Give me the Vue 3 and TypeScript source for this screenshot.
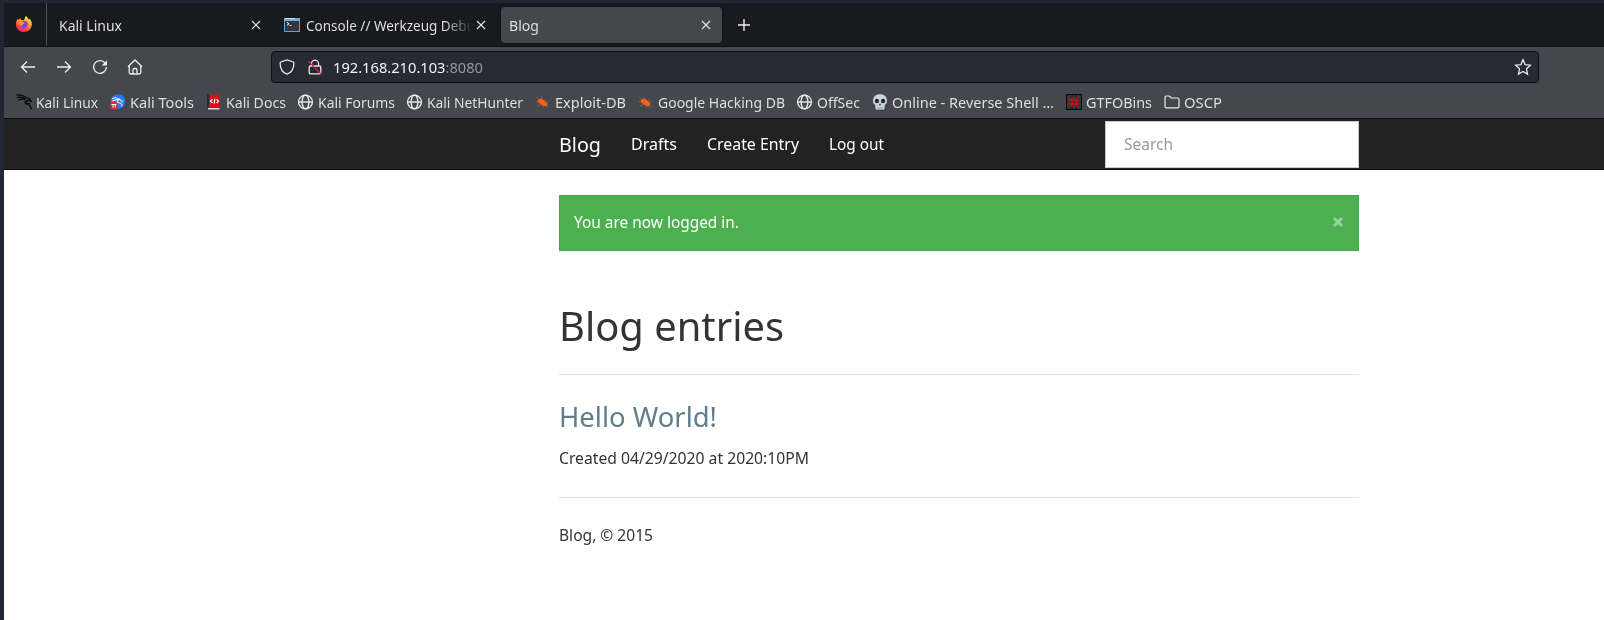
<script setup lang="ts">
interface Bookmark {
  icon: string
  label: string
  width: number
}

const bookmarks: Bookmark[] = [
  { icon: 'dragon', label: 'Kali Linux', width: 62 },
  { icon: 'tools', label: 'Kali Tools', width: 64 },
  { icon: 'docs', label: 'Kali Docs', width: 60 },
  { icon: 'globe', label: 'Kali Forums', width: 77 },
  { icon: 'globe', label: 'Kali NetHunter', width: 96 },
  { icon: 'bug', label: 'Exploit-DB', width: 71 },
  { icon: 'bug', label: 'Google Hacking DB', width: 127 },
  { icon: 'globe', label: 'OffSec', width: 43 },
  { icon: 'skull', label: 'Online - Reverse Shell …', width: 162 },
  { icon: 'bins', label: 'GTFOBins', width: 66 },
  { icon: 'folder', label: 'OSCP', width: 38 },
]

const links = [
  { label: 'Drafts', width: 46 },
  { label: 'Create Entry', width: 92 },
  { label: 'Log out', width: 55 },
]

// Condenses or widens a label so that it takes up exactly the given width.
const vFit = {
  mounted(el: HTMLElement, binding: { value: number }) {
    const natural = el.getBoundingClientRect().width
    el.style.transform = `scaleX(${binding.value / natural})`
    el.style.marginRight = `${binding.value - natural}px`
  },
}
</script>

<template>
  <div class="window">
    <header class="tabs">
      <div class="pinned">
        <svg width="18" height="18" viewBox="0 0 18 18">
          <defs>
            <linearGradient id="fire" x1="0.8" y1="0" x2="0.3" y2="1">
              <stop offset="0" stop-color="#fff04a" />
              <stop offset="0.45" stop-color="#ff9a2e" />
              <stop offset="0.75" stop-color="#ff4449" />
              <stop offset="1" stop-color="#e81d72" />
            </linearGradient>
          </defs>
          <path d="M2.6 3.7 3.6 5 5.3 3.1 6 5.1 9 5.2 10.7 1C12 1.5 12.8 3.3 14 4.4L14.7 3.8C16.7 6 17.2 8.8 16.7 11.1 15.7 15 12.7 17 9 17 4.5 17 1 13.6 1 9.4 1 7.1 1.5 5.2 2.6 3.7Z" fill="url(#fire)" />
          <path d="M5.8 7.4C7.3 5.5 9.3 6.1 10.6 5.7 12.4 6.5 13 8.2 12.7 9.7 12.2 12 10.5 13 8.8 12.9 6.8 12.8 5.3 11.3 5.3 9.4L7.8 9 9.7 8.2Z" fill="#7542e5" />
          <path d="M3.7 6.4 7.1 6.5 9.8 7.8 7.5 9.2 7.7 10.2 5.4 10.4Z" fill="#ff9130" />
        </svg>
      </div>
      <div class="tab first">
        <span v-fit="63" class="fit">Kali Linux</span>
        <svg class="close" width="10" height="10" viewBox="0 0 10 10"><path d="m1 1 8 8M9 1 1 9" /></svg>
      </div>
      <div class="tab second">
        <svg width="16" height="16" viewBox="0 0 16 16">
          <rect x="0.5" y="1.5" width="15" height="13" fill="#343638" stroke="#6a9de0" />
          <path d="M0 1h16v3H0z" fill="#71a8e9" />
          <path d="M1 1.5h10" stroke="#d4e5fa" />
          <path d="m3 5.3 2 1.5-2 1.5" fill="none" stroke="#fff" />
          <path d="M5.500 8.500h2" stroke="#ddd" />
        </svg>
        <div class="fading"><span v-fit="169" class="fit">Console // Werkzeug Debu</span></div>
        <svg class="close" width="10" height="10" viewBox="0 0 10 10"><path d="m1 1 8 8M9 1 1 9" /></svg>
      </div>
      <div class="tab active">
        <span v-fit="30" class="fit">Blog</span>
        <svg class="close" width="10" height="10" viewBox="0 0 10 10"><path d="m1 1 8 8M9 1 1 9" /></svg>
      </div>
      <svg class="plus" width="12" height="12" viewBox="0 0 12 12"><path d="M6 0v12M0 6h12" /></svg>
    </header>

    <section class="toolbar">
      <svg class="tool" width="16" height="16" viewBox="0 0 16 16"><path d="M15 8H1.5M7 2.5 1.5 8 7 13.5" /></svg>
      <svg class="tool" width="16" height="16" viewBox="0 0 16 16"><path d="M1 8h13.5M9 2.5 14.5 8 9 13.5" /></svg>
      <svg class="tool" width="16" height="16" viewBox="0 0 16 16">
        <path d="M13.200 4.200A6.400 6.400 0 1 0 14.400 8" />
        <path d="M15 1.200V6.500H9.700Z" fill="#eeeef0" stroke="none" />
      </svg>
      <svg class="tool home" width="16" height="16" viewBox="0 0 16 16">
        <path d="M1 7.8 8 1l7 6.8M2.200 7v6.300Q2.200 15 4 15h8q1.800 0 1.800-1.700V7M6 15v-4q0-1.500 1.500-1.500h1Q10 9.500 10 11v4" />
      </svg>
      <div class="address">
        <svg class="glyph" width="16" height="16" viewBox="0 0 16 16">
          <path d="M8 .9 14.300 3q.6.2.6.9C14.900 9.500 13 13.300 8 15.200 3 13.300 1.100 9.500 1.100 3.900q0-.7.6-.9Z" />
        </svg>
        <svg class="glyph lock" width="16" height="16" viewBox="0 0 16 16">
          <path d="M4.500 7V4.600a3.500 3.500 0 0 1 7 0V7M3.500 7h9q1.300 0 1.300 1.300v5.200q0 1.300-1.300 1.300h-9q-1.300 0-1.300-1.300V8.300Q2.200 7 3.500 7Z" />
          <path d="M1.300 2.200 14.500 15.400" class="slash" />
        </svg>
        <span v-fit="150" class="fit url">192.168.210.103<span class="port">:8080</span></span>
        <svg class="glyph star" width="18" height="18" viewBox="0 0 18 18">
          <path d="m9 1.700 2.100 4.900 5.300.6-3.900 3.600 1 5.300L9 13.400l-4.500 2.700 1-5.300-3.900-3.600 5.300-.6Z" />
        </svg>
      </div>
    </section>

    <nav class="bookmarks">
      <div v-for="b in bookmarks" :key="b.label" class="bookmark">
        <svg width="16" height="16" viewBox="0 0 16 16">
          <g v-if="b.icon === 'dragon'" fill="none" stroke="#08090b" stroke-width="1.300">
            <path d="M.3 1.100Q5 .4 9.800 3.300M.8 3.700Q5 2.400 9.200 4.800M2 6.500Q5.500 4.600 9.400 5.500" />
            <path d="M9 3.900 13 4.300 15.400 7.200 12.300 6.300 9.500 7.600Q8 9 10.500 9.800 15 10.500 15.200 15.200M10 9.500 13.800 9.400" />
          </g>
          <g v-else-if="b.icon === 'tools'">
            <circle cx="8" cy="7.500" r="7.300" fill="#2879ee" />
            <path d="M2 4.800Q6 2.500 9.500 5.200M2.500 7Q6 4.800 10 5.500L13 8M9 5.800Q5.500 8 9 8.800T12 12.500" fill="none" stroke="#dcebff" stroke-width="1.100" />
            <circle cx="3.900" cy="11.600" r="3.900" fill="#ee2432" />
            <path d="M1.500 10.500h5M3 10.500v3M5.200 10.500v3" stroke="#fff" fill="none" />
          </g>
          <g v-else-if="b.icon === 'docs'">
            <path d="M1 .5h12.500v14H2.500Q1 14.500 1 13Z" fill="#dc1018" />
            <path d="M1 .5h2v13H1z" fill="#222742" />
            <path d="M2 14h11.500v1.500H2z" fill="#dddbe0" />
            <path d="m6.500 5.200-2 2 2 2M10.500 5.200l2 2-2 2M8.800 4.800 8.200 9.600" fill="none" stroke="#fff" stroke-width="1.200" />
          </g>
          <g v-else-if="b.icon === 'globe'" fill="none" stroke="#ededee" stroke-width="1.350">
            <circle cx="7.500" cy="8" r="6.900" />
            <ellipse cx="7.500" cy="8" rx="3.400" ry="6.900" />
            <path d="M.5 8h14" />
          </g>
          <g v-else-if="b.icon === 'bug'">
            <path d="M3 5.500Q6 3.800 8.500 6L12.500 9.500 11.800 12Q8 12.800 5.500 10L2.800 8.300Z" fill="#f26513" />
            <path d="M1.500 3.500 5 6M.8 7.500h4M2 12l5-2M8 13.500l1-3M6 3l2 3M10.500 5 10 8M13.500 7.500 10 8.500M11 11.500l3 1.500" stroke="#c4622f" stroke-width=".6" />
          </g>
          <g v-else-if="b.icon === 'skull'">
            <path d="M8 .3C3.500.3 1 3 1 6.800c0 2 .5 3.500 2.400 4.200v3.200q0 1.500 1.500 1.500h6.200q1.500 0 1.500-1.500V11C14.500 10.300 15 8.800 15 6.800 15 3 12.500.3 8 .3Z" fill="#c9d5db" />
            <circle cx="4.900" cy="7" r="2.200" fill="#252b35" />
            <circle cx="11.100" cy="7" r="2.200" fill="#252b35" />
            <path d="m8 9-1.200 2.200h2.400Z" fill="#303640" />
            <path d="M6 13v3M8 13v3M10 13v3" stroke="#7c8990" stroke-width=".8" />
          </g>
          <g v-else-if="b.icon === 'bins'">
            <rect x=".5" y=".5" width="15" height="15" fill="#35373b" stroke="#050505" />
            <path d="M6 1v14M10 1v14" stroke="#1c1d20" stroke-width="1.500" />
            <path d="M6 3v10M10 3v10M3 6h10M3 10h10" stroke="#d20e14" stroke-width="1.500" />
          </g>
          <path v-else d="M1 3.300Q1 2 2.300 2h3.200l1.700 2h6.300Q15 4 15 5.300v7.200q0 1.300-1.500 1.300H2.500Q1 13.800 1 12.500Z" fill="none" stroke="#ededee" stroke-width="1.200" />
        </svg>
        <span v-fit="b.width" class="fit">{{ b.label }}</span>
      </div>
    </nav>

    <main class="page">
      <nav class="navbar">
        <a class="brand"><span v-fit="42" class="fit">Blog</span></a>
        <a v-for="l in links" :key="l.label" class="link"><span v-fit="l.width" class="fit">{{ l.label }}</span></a>
        <div class="search"><span v-fit="49" class="fit">Search</span></div>
      </nav>
      <div class="container">
        <div class="alert">
          <span v-fit="165" class="fit">You are now logged in.</span>
          <svg width="12" height="12" viewBox="0 0 12 12"><path d="m2 2 8 8M10 2 2 10" /></svg>
        </div>
        <h1><span v-fit="225" class="fit">Blog entries</span></h1>
        <hr />
        <h3><span v-fit="158" class="fit">Hello World!</span></h3>
        <p class="created"><span v-fit="250" class="fit">Created 04/29/2020 at 2020:10PM</span></p>
        <hr />
        <p class="footer"><span v-fit="94" class="fit">Blog, © 2015</span></p>
      </div>
    </main>
  </div>
</template>

<style>
body {
  margin: 0;
  overflow: hidden;
}
</style>

<style scoped>
.window {
  box-sizing: border-box;
  width: 1604px;
  height: 620px;
  padding: 3px 0 0 4px;
  background: #232530;
  font-family: "Noto Sans", sans-serif;
  font-size: 14.67px;
  color: #dfdfe0;
  overflow: hidden;
}

svg {
  display: block;
  flex: none;
}

.fit {
  display: inline-block;
  flex: none;
  white-space: pre;
  transform-origin: 0 50%;
}

.tabs {
  box-sizing: border-box;
  display: flex;
  align-items: center;
  height: 44px;
  background: #191a1f;
  border-bottom: 1px solid #0e0f13;
}

.pinned {
  box-sizing: border-box;
  display: flex;
  align-items: center;
  width: 43px;
  height: 43px;
  padding: 0 0 1px 11px;
  border-right: 1px solid #505157;
}

.tab {
  box-sizing: border-box;
  display: flex;
  align-items: center;
  height: 36px;
  line-height: 20px;
}

.first {
  width: 228px;
  padding: 0 14px 0 12px;
}

.second {
  width: 226px;
  padding: 0 15px 0 9px;
}

.fading {
  width: 170px;
  margin-left: 6px;
  mask-image: linear-gradient(to right, #000 138px, transparent 167px);
}

.active {
  width: 221px;
  padding: 0 11px 0 8px;
  border-radius: 4px;
  background: #45474e;
  box-shadow: 0 0 3px #0b0c0f;
}

.close {
  margin-left: auto;
  fill: none;
  stroke: #e6e6e7;
  stroke-width: 1.1;
}

.plus {
  margin-left: 16px;
  stroke: #f0f0f0;
  stroke-width: 1.4;
}

.toolbar {
  box-sizing: border-box;
  display: flex;
  align-items: center;
  height: 40px;
  padding: 0 65px 0 16px;
  background: #45474e;
}

.tool {
  margin-right: 20px;
  fill: none;
  stroke: #eeeef0;
  stroke-width: 1.3;
}

.home {
  margin-left: -1px;
}

.address {
  box-sizing: border-box;
  display: flex;
  flex: 1;
  align-items: center;
  height: 32px;
  margin-left: 108px;
  padding: 0 6px 0 7px;
  border: 1px solid #0c0d12;
  border-radius: 4px;
  background: #272933;
}

.glyph {
  fill: none;
  stroke: #e8e8ea;
  stroke-width: 1.3;
}

.lock {
  margin-left: 12px;
}

.slash {
  stroke: #e01f4c;
}

.url {
  margin-left: 10px;
  color: #f3f3f4;
}

.port {
  color: #95969c;
}

.star {
  margin-left: auto;
}

.bookmarks {
  box-sizing: border-box;
  display: flex;
  align-items: center;
  gap: 12px;
  height: 32px;
  padding: 0 0 1px 12px;
  border-bottom: 1px solid #0c0d12;
  background: #45474e;
}

.bookmark {
  display: flex;
  align-items: center;
  gap: 4px;
  height: 20px;
  line-height: 20px;
}

.page {
  height: 501px;
  background: #fff;
  color: #333;
  font-size: 16px;
}

.navbar {
  box-sizing: border-box;
  display: flex;
  align-items: center;
  height: 51px;
  padding: 0 245px 0 555px;
  border-bottom: 1px solid #080808;
  background: #222;
  color: #fff;
}

.brand {
  margin-right: 30px;
  font-size: 19.5px;
}

.link {
  margin-right: 30px;
}

.search {
  box-sizing: border-box;
  width: 254px;
  height: 47px;
  margin-left: auto;
  padding-left: 18px;
  border: 1px solid #ccc;
  background: #fff;
  color: #999;
  line-height: 44px;
}

.container {
  width: 800px;
  padding: 25px 0 0 555px;
}

.alert {
  box-sizing: border-box;
  display: flex;
  align-items: center;
  justify-content: space-between;
  height: 56px;
  padding: 0 14px 2px;
  border: 1px solid #45a94a;
  background: #4caf50;
  color: #fff;
}

.alert svg {
  fill: none;
  stroke: #9bd39d;
  stroke-width: 3;
}

h1,
h3,
p {
  margin: 0;
  font-weight: 400;
}

h1 {
  padding-top: 50px;
  font-size: 40px;
  line-height: 50px;
}

h3 {
  padding-top: 21px;
  color: #607d8b;
  font-size: 28px;
  line-height: 40px;
}

hr {
  height: 1px;
  margin: 23px 0 0;
  border: 0;
  background: #e3e3e3;
}

.created {
  padding-top: 10px;
  line-height: 24px;
}

.created + hr {
  margin-top: 27px;
}

.footer {
  padding-top: 25px;
  line-height: 24px;
}
</style>
